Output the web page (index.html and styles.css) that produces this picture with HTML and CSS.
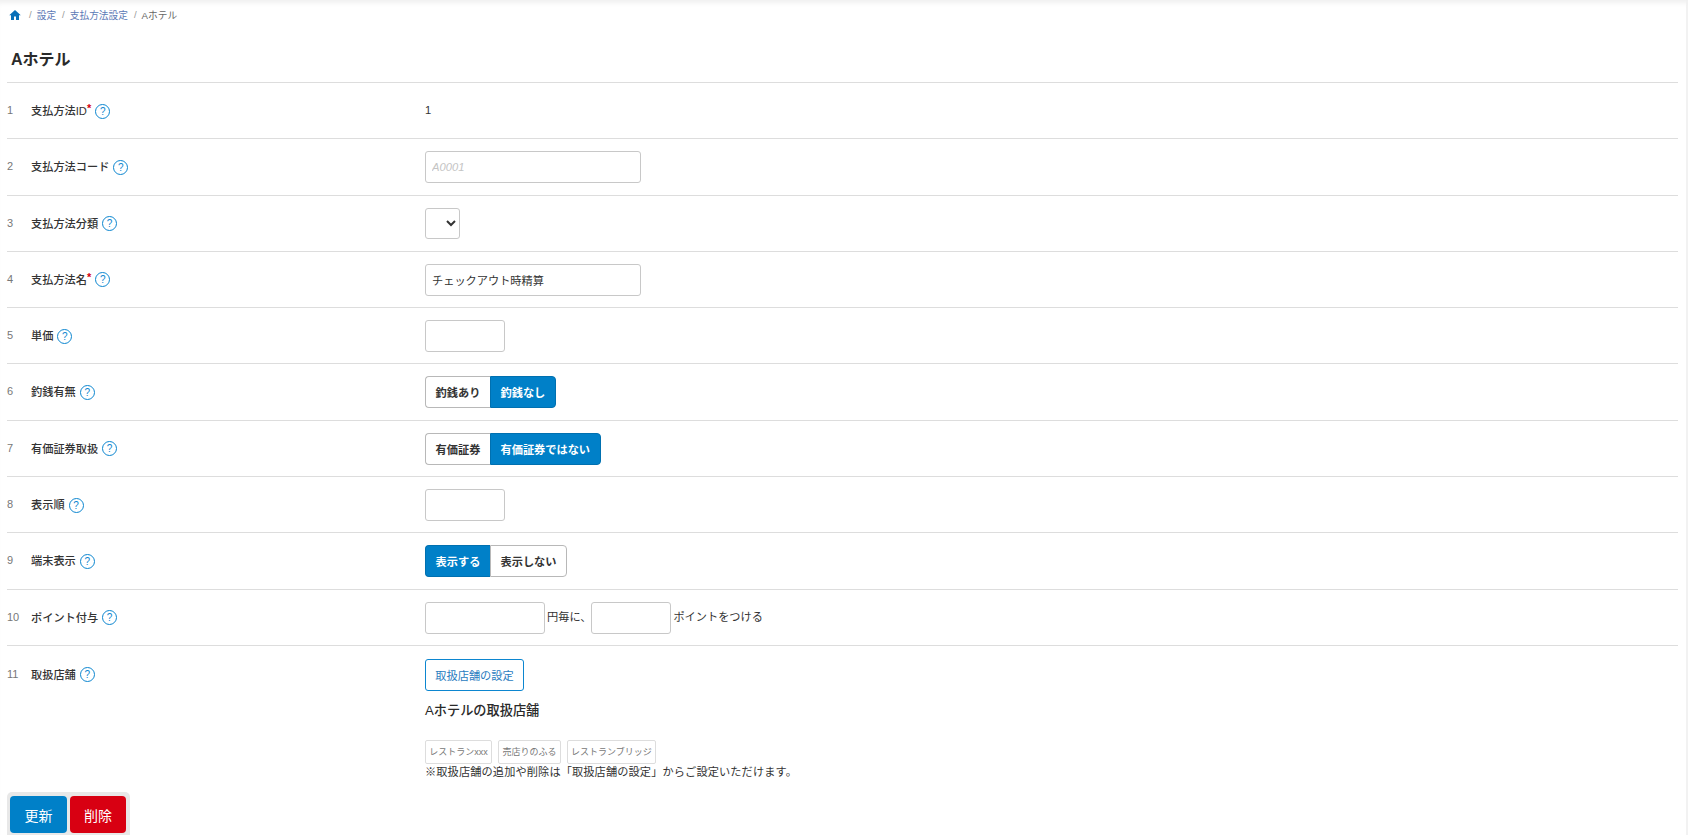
FILE: index.html
```html
<!DOCTYPE html>
<html lang="ja">
<head>
<meta charset="utf-8">
<title>Aホテル</title>
<link rel="stylesheet" href="styles.css">
</head>
<body>
<div class="page">
  <nav class="crumbs">
    <svg class="home" viewBox="0 0 24 24"><path d="M12 2 0.5 12.500H4V22h6v-7h4v7h6v-9.500h3.500z"/></svg>
    <span class="sep">/</span><a>設定</a><span class="sep">/</span><a>支払方法設定</a><span class="sep">/</span><span class="cur">Aホテル</span>
  </nav>
  <h1 class="title">Aホテル</h1>
  <div class="rows">
    <div class="row"><span class="num">1</span><div class="label">支払方法ID<sup class="req">*</sup><span class="help">?</span></div><div class="val plain">1</div></div>
    <div class="row"><span class="num">2</span><div class="label">支払方法コード<span class="help">?</span></div><div class="val"><input class="inp wide" placeholder="A0001"></div></div>
    <div class="row"><span class="num">3</span><div class="label">支払方法分類<span class="help">?</span></div><div class="val"><select class="sel"><option></option></select></div></div>
    <div class="row"><span class="num">4</span><div class="label">支払方法名<sup class="req">*</sup><span class="help">?</span></div><div class="val"><input class="inp wide" value="チェックアウト時精算"></div></div>
    <div class="row"><span class="num">5</span><div class="label">単価<span class="help">?</span></div><div class="val"><input class="inp small"></div></div>
    <div class="row"><span class="num">6</span><div class="label">釣銭有無<span class="help">?</span></div><div class="val"><div class="seg"><button class="opt">釣銭あり</button><button class="opt on">釣銭なし</button></div></div></div>
    <div class="row"><span class="num">7</span><div class="label">有価証券取扱<span class="help">?</span></div><div class="val"><div class="seg"><button class="opt">有価証券</button><button class="opt on">有価証券ではない</button></div></div></div>
    <div class="row"><span class="num">8</span><div class="label">表示順<span class="help">?</span></div><div class="val"><input class="inp small"></div></div>
    <div class="row"><span class="num">9</span><div class="label">端末表示<span class="help">?</span></div><div class="val"><div class="seg"><button class="opt on">表示する</button><button class="opt">表示しない</button></div></div></div>
    <div class="row"><span class="num">10</span><div class="label">ポイント付与<span class="help">?</span></div><div class="val inline"><input class="inp mid"><span class="txt first">円毎に、</span><input class="inp small"><span class="txt">ポイントをつける</span></div></div>
    <div class="row last"><span class="num">11</span><div class="label">取扱店舗<span class="help">?</span></div>
      <div class="val stack">
        <button class="outline">取扱店舗の設定</button>
        <h2 class="sub">Aホテルの取扱店舗</h2>
        <div class="tags"><span class="tag">レストランxxx</span><span class="tag">売店りのふる</span><span class="tag">レストランブリッジ</span></div>
        <p class="note">※取扱店舗の追加や削除は「取扱店舗の設定」からご設定いただけます。</p>
      </div>
    </div>
  </div>
</div>
<div class="actions"><button class="act blue">更新</button><button class="act red">削除</button></div>
</body>
</html>
```
FILE: styles.css
```css
* { box-sizing: border-box; }
html, body { margin: 0; height: 100%; overflow: hidden; }
body {
  background: #fff;
  color: #333;
  font-family: "Liberation Sans", "Noto Sans CJK JP", sans-serif;
  font-size: 11.2px;
  position: relative;
  box-shadow: inset 0 6px 5px -3px #f0f0f0, inset -2px 0 0 #f2f2f2;
}
.page { padding: 0 10px 0 7px; }
.crumbs {
  display: flex;
  align-items: center;
  height: 15px;
  margin-top: 7px;
  padding-left: 2px;
  font-size: 9.7px;
  color: #777;
}
.home { width: 12px; height: 12px; fill: #0a70b8; margin-right: 2px; }
.crumbs a { color: #5b78b5; }
.sep { color: #999; margin: 0 5px 0 6px; }
.cur { color: #666; }
.title {
  margin: 0;
  height: 60px;
  padding: 26px 0 0 4px;
  font-size: 16px;
  line-height: 24px;
  font-weight: 700;
  color: #2a2a2a;
}
.rows { border-top: 1px solid #ddd; }
.row {
  display: flex;
  height: 56.3px;
  border-bottom: 1px solid #ddd;
  padding-top: 12px;
}
.row.last { border-bottom: 0; height: auto; padding-top: 13px; }
.num { width: 24px; line-height: 30px; height: 32px; color: #777; font-size: 11px; flex: none; }
.label {
  width: 394px;
  flex: none;
  display: flex;
  align-items: center;
  height: 30px;
  font-weight: 500;
  color: #333;
}
.req { color: #d40010; font-size: 11px; line-height: 1; align-self: flex-start; margin: 8px 0 0; font-weight: 700; }
.help {
  width: 15px;
  height: 15px;
  margin-left: 4px;
  border: 1.2px solid #0c86d0;
  border-radius: 50%;
  color: #0c86d0;
  font-size: 10px;
  font-weight: 400;
  display: flex;
  align-items: center;
  justify-content: center;
  position: relative;
  top: 1px;
}
.val { display: flex; align-items: flex-start; }
.val.plain { line-height: 30px; }
.inp {
  height: 32px;
  border: 1px solid #c8c8c8;
  border-radius: 3px;
  padding: 0 6px;
  font: inherit;
  color: #333;
  background: #fff;
  outline: 0;
}
.inp::placeholder { color: #c4c4c4; font-style: italic; opacity: 1; }
.wide { width: 216px; }
.small { width: 80px; }
.mid { width: 120px; }
.sel {
  width: 35px;
  height: 31px;
  border: 1px solid #c8c8c8;
  border-radius: 3px;
  background: #fff;
  color: #333;
  font-size: 11px;
}
.seg { display: flex; height: 32px; }
.opt {
  height: 32px;
  padding: 0 9.6px;
  border: 1px solid #b8b8b8;
  background: #fff;
  color: #333;
  font: inherit;
  font-weight: 700;
  border-radius: 0 4px 4px 0;
}
.opt:first-child { border-radius: 4px 0 0 4px; border-right: 0; }
.opt.on { background: #0080c8; border-color: #0070b0; color: #fff; }
.inline .txt { line-height: 30px; margin: 0 0 0 2px; }
.stack { flex-direction: column; }
.outline {
  width: 99px;
  height: 32px;
  border: 1px solid #0c86d0;
  border-radius: 3px;
  background: #fff;
  color: #2a7cc0;
  font: inherit;
}
.sub { margin: 10px 0 0; font-size: 13.2px; line-height: 20px; font-weight: 500; color: #2a2a2a; }
.tags { display: flex; gap: 6px; margin-top: 19px; }
.tag {
  height: 24px;
  line-height: 22px;
  padding: 0 3.3px;
  border: 1px solid #ddd;
  border-radius: 2px;
  font-size: 9px;
  color: #777;
}
.note { margin: 0; line-height: 16px; letter-spacing: .12px; color: #333; }
.actions {
  position: absolute;
  left: 7px;
  top: 792px;
  display: flex;
  gap: 3px;
  padding: 4px 4px 2px 3px;
  background: #e8e8e8;
  border-radius: 5px 5px 0 0;
}
.act {
  height: 37px;
  border: 0;
  border-radius: 4px;
  color: #fff;
  font: inherit;
  font-size: 14px;
}
.blue { width: 57px; background: #0080c8; }
.red { width: 56px; background: #d80012; }
```
